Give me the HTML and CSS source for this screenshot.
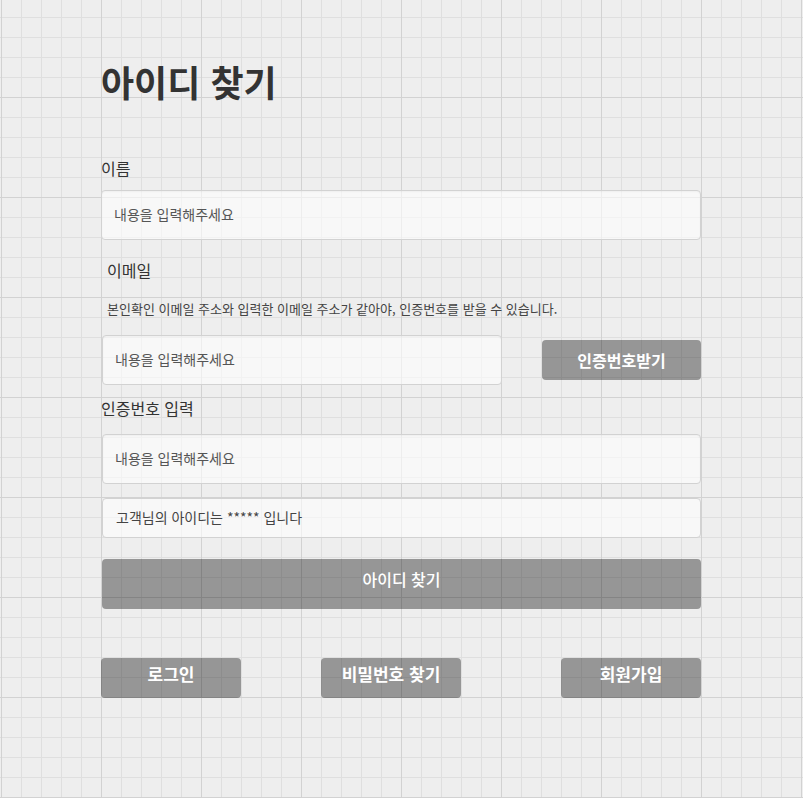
FILE: index.html
```html
<!DOCTYPE html>
<html lang="ko">
<head>
<meta charset="utf-8">
<title>아이디 찾기</title>
<link rel="stylesheet" href="styles.css">
</head>
<body>
<main class="page">
  <h1 class="title">아이디 찾기</h1>

  <label class="label label-name" for="name">이름</label>
  <input class="field field-first" id="name" type="text" placeholder="내용을 입력해주세요">

  <label class="label label-email" for="email">이메일</label>
  <p class="note">본인확인 이메일 주소와 입력한 이메일 주소가 같아야, 인증번호를 받을 수 있습니다.</p>
  <div class="email-row">
    <input class="field field-email" id="email" type="text" placeholder="내용을 입력해주세요">
    <button class="btn btn-code" type="button">인증번호받기</button>
  </div>

  <label class="label label-code" for="code">인증번호 입력</label>
  <input class="field field-code" id="code" type="text" placeholder="내용을 입력해주세요">

  <div class="result">고객님의 아이디는 ***** 입니다</div>

  <button class="btn btn-main" type="button">아이디 찾기</button>

  <nav class="links">
    <button class="btn btn-link" type="button">로그인</button>
    <button class="btn btn-link btn-pw" type="button">비밀번호 찾기</button>
    <button class="btn btn-link btn-join" type="button">회원가입</button>
  </nav>
</main>
</body>
</html>
```

FILE: styles.css
```css
html {
  background-color: #eeeeee;
  background-image:
    linear-gradient(#d2d2d2 1px, transparent 1px),
    linear-gradient(90deg, #d2d2d2 1px, transparent 1px),
    linear-gradient(#dfdfdf 1px, transparent 1px),
    linear-gradient(90deg, #dfdfdf 1px, transparent 1px);
  background-size: 100px 100px, 100px 100px, 20px 20px, 20px 20px;
  background-position: 1px -3px, 1px -3px, 1px -3px, 1px -3px;
  min-height: 100%;
}

body {
  margin: 0;
  font-family: "Noto Sans CJK KR", "Noto Sans", sans-serif;
  color: #333333;
}

.page {
  width: 600px;
  margin-left: 101px;
  padding-top: 59px;
  display: flex;
  flex-direction: column;
  align-items: flex-start;
}

.title {
  margin: 0;
  font-size: 36px;
  line-height: 44px;
  font-weight: 700;
  color: #333333;
}

.label {
  display: block;
  font-size: 16px;
  line-height: 20px;
  color: #333333;
}

.label-name {
  margin-top: 55px;
  margin-bottom: 12px;
}

.label-email {
  margin-top: 20px;
  padding-left: 6px;
}

.note {
  margin: 20px 0 0 0;
  padding-left: 6px;
  font-size: 13px;
  line-height: 18px;
  color: #444444;
  font-weight: 400;
}

.field {
  box-sizing: border-box;
  height: 50px;
  border: 1px solid #d2d2d2;
  border-radius: 4px;
  background: rgba(255, 255, 255, 0.6);
  box-shadow: inset 0 1px 2px rgba(0, 0, 0, 0.04);
  padding: 0 12px 2px 12px;
  font-family: inherit;
  font-size: 14px;
  color: #444444;
  outline: none;
}

.field::placeholder {
  color: #555555;
  opacity: 1;
}

.field-first {
  width: 600px;
}

.email-row {
  margin-top: 17px;
  width: 600px;
  display: flex;
  align-items: center;
}

.field-email {
  width: 400px;
  margin-left: 1px;
}

.btn {
  border: none;
  border-radius: 4px;
  background: rgba(0, 0, 0, 0.37);
  color: #ffffff;
  font-family: inherit;
  padding: 0;
  cursor: pointer;
}

.btn-code {
  margin-left: auto;
  width: 159px;
  height: 40px;
  font-size: 16px;
  font-weight: 700;
}

.label-code {
  margin-top: 13px;
}

.field-code {
  margin-top: 16px;
  margin-left: 1px;
  width: 599px;
}

.result {
  box-sizing: border-box;
  margin-top: 14px;
  margin-left: 1px;
  width: 599px;
  height: 40px;
  border: 1px solid #d2d2d2;
  border-radius: 4px;
  background: rgba(255, 255, 255, 0.6);
  padding: 0 13px 2px 13px;
  display: flex;
  align-items: center;
  font-size: 14px;
  color: #444444;
}

.btn-main {
  margin-top: 21px;
  margin-left: 1px;
  width: 599px;
  height: 50px;
  padding-bottom: 10px;
  font-size: 16px;
  font-weight: 500;
}

.links {
  margin-top: 49px;
  display: flex;
}

.btn-link {
  width: 140px;
  height: 40px;
  padding-bottom: 10px;
  font-size: 17px;
  font-weight: 700;
}

.btn-pw {
  margin-left: 80px;
}

.btn-join {
  margin-left: 100px;
}
```
